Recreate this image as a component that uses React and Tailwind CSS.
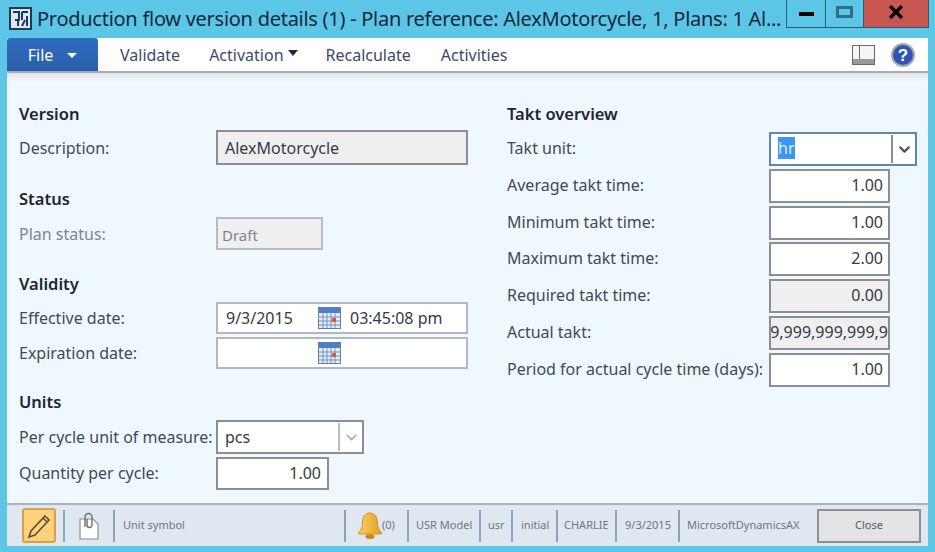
import { ChevronDown } from "lucide-react";

function CalendarIcon() {
  return (
    <svg width="23" height="22" viewBox="0 0 23 22" className="shrink-0">
      <rect x="0.5" y="0.5" width="22" height="21" fill="#e8eef8" stroke="#5f7fa8" />
      <rect x="1" y="1" width="21" height="5" fill="#4f7fc4" />
      <path d="M1 10h21M1 14h21M1 18h21M5 6v15M9 6v15M13 6v15M17 6v15" stroke="#6f93c4" strokeWidth="1" />
      <rect x="14" y="11" width="4" height="4" fill="#e0563a" />
    </svg>
  );
}

function Heading({ children, className = "" }) {
  return <div className={"flex h-[20px] items-center font-semibold text-[16.5px] text-[#1c2530] " + className}>{children}</div>;
}

function Label({ children, className = "text-[#3f4a55]" }) {
  return <div className={"text-[16px] whitespace-nowrap " + className}>{children}</div>;
}

function Right({ children, gray, tight }) {
  return (
    <div className={"flex h-[34px] w-[121px] items-center justify-end border-2 border-[#8b8f93] pb-[2px] text-[16px] text-[#333b44] overflow-hidden whitespace-nowrap " + (gray ? "bg-[#efefef] " : "bg-white ") + (tight ? "px-0" : "px-[5px]")}>
      {children}
    </div>
  );
}

function TaktRow({ label, value, gray, tight }) {
  return (
    <div className="mt-[2.8px] flex items-center justify-between">
      <Label className="pb-[2px] text-[#3f4a55]">{label}</Label>
      <Right gray={gray} tight={tight}>{value}</Right>
    </div>
  );
}

function StatusItem({ children, className = "" }) {
  return <div className={"flex h-[32px] shrink-0 items-center border-r-2 border-[#8ea3b8] text-[11px] text-[#6d7680] whitespace-nowrap " + className}>{children}</div>;
}

export default function App() {
  return (
    <div className="flex h-[552px] w-[935px] flex-col overflow-hidden bg-[#5cc6e6] font-['Noto_Sans','Open_Sans',sans-serif]">
      {/* Title bar */}
      <div className="flex h-[38px] shrink-0 items-start pl-[9px]">
        <svg width="23" height="23" viewBox="0 0 23 23" className="mt-[7px] shrink-0">
          <rect width="23" height="23" fill="#1c3a5e" />
          <rect x="2" y="2" width="19" height="19" fill="#dfe8f2" />
          <path d="M4 5h6v8H6M13 5h6M13 5v8M18 9v10M9 13v6M13 19l3-6" stroke="#1c3a5e" strokeWidth="2" fill="none" />
        </svg>
        <div className="mt-[6px] ml-[5px] w-[750px] text-[20px] leading-[26px] whitespace-nowrap text-[#13293d] tracking-[-0.27px]">
          Production flow version details (1) - Plan reference: AlexMotorcycle, 1, Plans: 1 Al...
        </div>
        <div className="ml-auto mr-[6px] flex h-[28px]">
          <div className="flex w-[40px] items-center justify-center border border-t-0 border-[#2c5a70]">
            <div className="h-[4px] w-[15px] bg-black" />
          </div>
          <div className="flex w-[37px] items-start justify-center border-b border-[#2c5a70] pt-[6px]">
            <div className="h-[12px] w-[17px] border-[3px] border-[#2f6f86]" />
          </div>
          <div className="flex w-[66px] items-center justify-center border border-t-0 border-[#2c5a70] bg-[#c75750] pb-[4px]">
            <svg width="16" height="14" viewBox="0 0 16 14">
              <path d="M2 1l12 12M14 1L2 13" stroke="#000" strokeWidth="3.4" />
            </svg>
          </div>
        </div>
      </div>

      {/* Window body */}
      <div className="mx-[7px] flex h-[508px] w-[921px] shrink-0 flex-col">
        {/* Ribbon */}
        <div className="flex h-[35px] shrink-0 items-center border-b-2 border-[#a9adb1] bg-white text-[16px] text-[#3b4a6b]">
          <div className="flex h-[33px] w-[91px] items-center justify-center gap-[14px] rounded-t-[3px] bg-gradient-to-b from-[#2f6dbd] to-[#2a5fab] text-white">
            <span>File</span>
            <span className="mt-[2px] border-x-[5px] border-t-[5px] border-x-transparent border-t-white" />
          </div>
          <div className="ml-[22px]">Validate</div>
          <div className="ml-[29px] flex items-center gap-[4px]">
            Activation
            <span className="mb-[4px] border-x-[5px] border-t-[6px] border-x-transparent border-t-[#1e2a44]" />
          </div>
          <div className="ml-[28px]">Recalculate</div>
          <div className="ml-[30px]">Activities</div>
          <div className="ml-auto mr-[13px] flex items-center gap-[16px]">
            <svg width="23" height="20" viewBox="0 0 23 20">
              <rect x="0.5" y="0.5" width="22" height="19" fill="#f5f5f5" stroke="#6b6b6b" />
              <rect x="1" y="14" width="21" height="5" fill="#9a9a9a" />
              <path d="M7.5 1v13" stroke="#6b6b6b" />
            </svg>
            <svg width="24" height="24" viewBox="0 0 24 24">
              <circle cx="12" cy="12" r="11" fill="#2f55b0" stroke="#a3a9b3" strokeWidth="2" />
              <text x="12" y="18" textAnchor="middle" fontSize="17" fontWeight="700" fill="#fff" fontFamily="Liberation Sans">?</text>
            </svg>
          </div>
        </div>

        {/* Form */}
        <div className="flex min-h-0 flex-1 bg-[#eff8fe] bg-gradient-to-b from-[#dfe4e8] from-0% to-[#eff8fe] to-[2%]">
          <div className="w-[488px] shrink-0 pl-[12px] pt-[31px]">
            <Heading>Version</Heading>
            <div className="mt-[6px] flex items-center">
              <Label className="w-[197px] text-[#3f4a55]">Description:</Label>
              <div className="flex h-[35px] w-[252px] items-center border-2 border-[#8b8f93] bg-[#efefef] px-[7px] text-[16px] text-[#333b44]">AlexMotorcycle</div>
            </div>
            <Heading className="mt-[24px]">Status</Heading>
            <div className="mt-[8px] flex items-center">
              <Label className="w-[197px] text-[14.5px] text-[#7d858c]">Plan status:</Label>
              <div className="flex h-[33px] w-[107px] items-center border-2 border-[#b9bcbf] bg-[#efefef] px-[4px] pt-[3px] text-[15px] text-[#7d858c]">Draft</div>
            </div>
            <Heading className="mt-[24px]">Validity</Heading>
            <div className="mt-[8px] flex items-center">
              <Label className="w-[197px] text-[#3f4a55]">Effective date:</Label>
              <div className="flex h-[32px] w-[252px] items-center border-2 border-[#b4b8bc] bg-white pl-[8px] text-[16px] text-[#333b44]">
                <span className="w-[92px]">9/3/2015</span>
                <CalendarIcon />
                <span className="ml-[9px]">03:45:08 pm</span>
              </div>
            </div>
            <div className="mt-[3px] flex items-center">
              <Label className="w-[197px] text-[#3f4a55]">Expiration date:</Label>
              <div className="flex h-[32px] w-[252px] items-center border-2 border-[#b4b8bc] bg-white pl-[100px]">
                <CalendarIcon />
              </div>
            </div>
            <Heading className="mt-[23px]">Units</Heading>
            <div className="mt-[8px] flex items-center">
              <Label className="w-[197px] text-[#3f4a55]">Per cycle unit of measure:</Label>
              <div className="flex h-[34px] w-[148px] items-center border-2 border-[#8b8f93] bg-white pl-[7px] text-[16px] text-[#333b44]">
                <span className="flex-1">pcs</span>
                <div className="flex h-[28px] w-[24px] items-center justify-center border-l-2 border-[#b9bcbf]">
                  <ChevronDown size={17} strokeWidth={2} className="text-[#a8adb2]" />
                </div>
              </div>
            </div>
            <div className="mt-[3px] flex items-center">
              <Label className="w-[197px] pb-[2px] text-[#3f4a55]">Quantity per cycle:</Label>
              <div className="flex h-[33px] w-[113px] items-center justify-end border-2 border-[#8b8f93] bg-white px-[6px] pb-[2px] text-[16px] text-[#333b44]">1.00</div>
            </div>
          </div>

          <div className="w-[395px] shrink-0 pl-[12px] pt-[31px]">
            <Heading>Takt overview</Heading>
            <div className="mt-[8px] flex items-center justify-between">
              <Label className="pb-[2px] text-[#3f4a55]">Takt unit:</Label>
              <div className="mr-[-27px] flex h-[34px] w-[148px] items-center border-2 border-[#5f87a8] bg-white pl-[7px] text-[16px] text-[#333b44]">
                <span className="flex-1 pb-[2px]"><span className="bg-[#3a96f5] text-[#dcebff]">hr</span></span>
                <div className="flex h-[28px] w-[24px] items-center justify-center border-l-2 border-[#8b8f93]">
                  <ChevronDown size={17} strokeWidth={3} className="text-[#4a5560]" />
                </div>
              </div>
            </div>
            <TaktRow label="Average takt time:" value="1.00" />
            <TaktRow label="Minimum takt time:" value="1.00" />
            <TaktRow label="Maximum takt time:" value="2.00" />
            <TaktRow label="Required takt time:" value="0.00" gray />
            <TaktRow label="Actual takt:" value="9,999,999,999,9" gray tight />
            <TaktRow label="Period for actual cycle time (days):" value="1.00" />
          </div>
        </div>

        {/* Status bar */}
        <div className="flex h-[43px] shrink-0 items-center border-t-2 border-[#aab4bf] bg-[#dfe8f0] pl-[15px]">
          <div className="flex h-[35px] w-[34px] items-center justify-center rounded-[3px] border-2 border-[#d9a04f] bg-[#fcd27a]">
            <svg width="24" height="26" viewBox="0 0 24 26" fill="none">
              <path d="M18 3l4 4L8 22l-6 2 2-6z" stroke="#5a5240" strokeWidth="1.6" />
              <path d="M16 5l4 4" stroke="#5a5240" strokeWidth="1.6" />
            </svg>
          </div>
          <div className="ml-[7px] h-[32px] w-[2px] bg-[#8ea3b8]" />
          <svg width="20" height="28" viewBox="0 0 20 28" fill="none" className="ml-[14px]">
            <path d="M1 7h13l5 5v15H1z" fill="#fff" stroke="#8a8f94" strokeWidth="1.2" />
            <path d="M6 15V5a3 3 0 0 1 7 0v8a2.5 2.5 0 0 1-5 0V7" stroke="#6b7075" strokeWidth="1.4" />
          </svg>
          <div className="ml-[14px] h-[32px] w-[2px] bg-[#8ea3b8]" />
          <StatusItem className="w-[231px] pl-[8px]">Unit symbol</StatusItem>
          <StatusItem className="w-[63px] pl-[12px]">
            <svg width="24" height="28" viewBox="0 0 24 28">
              <defs>
                <linearGradient id="bell" x1="0" y1="0" x2="1" y2="0">
                  <stop offset="0" stopColor="#f8d163" />
                  <stop offset="1" stopColor="#e39f1c" />
                </linearGradient>
              </defs>
              <path d="M12 1c5 0 7.5 4 7.5 10 0 5 1.5 7 4 9.5v1.5H.5v-1.5C3 18 4.5 16 4.5 11 4.5 5 7 1 12 1z" fill="url(#bell)" stroke="#d0932a" />
              <ellipse cx="12" cy="24.5" rx="4.5" ry="2.5" fill="#c98a14" />
            </svg>
            <span>(0)</span>
          </StatusItem>
          <StatusItem className="w-[72px] pl-[7px]">USR Model</StatusItem>
          <StatusItem className="w-[32px] pl-[7px]">usr</StatusItem>
          <StatusItem className="w-[45px] pl-[8px]">initial</StatusItem>
          <StatusItem className="w-[59px] pl-[6px]">CHARLIE</StatusItem>
          <StatusItem className="w-[63px] pl-[8px]">9/3/2015</StatusItem>
          <div className="pl-[7px] text-[11px] text-[#6d7680] whitespace-nowrap">MicrosoftDynamicsAX</div>
          <div className="ml-auto mr-[7px] flex h-[34px] w-[104px] items-center justify-center border-2 border-[#8b8f93] bg-[#e3e3e3] text-[11px] text-[#555c63]">Close</div>
        </div>
      </div>
    </div>
  );
}
